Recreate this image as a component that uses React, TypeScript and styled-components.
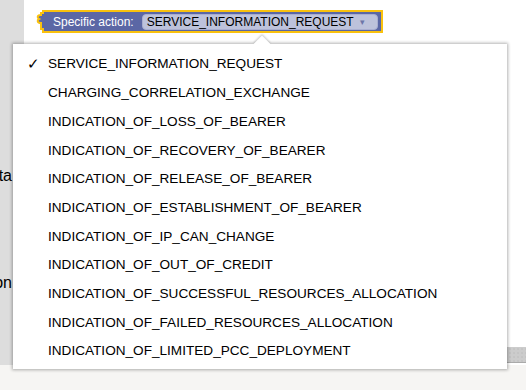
import React from 'react';
import styled, { createGlobalStyle } from 'styled-components';

const actions = [
  'SERVICE_INFORMATION_REQUEST',
  'CHARGING_CORRELATION_EXCHANGE',
  'INDICATION_OF_LOSS_OF_BEARER',
  'INDICATION_OF_RECOVERY_OF_BEARER',
  'INDICATION_OF_RELEASE_OF_BEARER',
  'INDICATION_OF_ESTABLISHMENT_OF_BEARER',
  'INDICATION_OF_IP_CAN_CHANGE',
  'INDICATION_OF_OUT_OF_CREDIT',
  'INDICATION_OF_SUCCESSFUL_RESOURCES_ALLOCATION',
  'INDICATION_OF_FAILED_RESOURCES_ALLOCATION',
  'INDICATION_OF_LIMITED_PCC_DEPLOYMENT',
];

const GlobalStyle = createGlobalStyle`
  html, body {
    margin: 0;
    padding: 0;
    width: 526px;
    height: 390px;
    overflow: hidden;
    font-family: "Liberation Sans", Arial, sans-serif;
  }
`;

function App() {
  const selected = actions[0];
  return (
    <>
      <GlobalStyle />
      <Sframe>
        <Stoolbox>
          <Scategory>Data</Scategory>
          <Scategory>Action</Scategory>
        </Stoolbox>
        <Sworkspace>
          <Sblock>
            <Stab width="8" height="18" viewBox="0 0 8 18">
              <path d="M8 1 H5 V3 C1 3 1 6 3 7 C1 8 1 11 5 11 V13 V17 H8" fill="#5b67a5" stroke="#f9c10e" strokeWidth="2" />
            </Stab>
            <Slabel>Specific action:</Slabel>
            <Sfield>
              {selected}
              <Scaret>▾</Scaret>
            </Sfield>
          </Sblock>
          <Spopup>
            <Sarrow />
            <Smenu>
              {actions.map((a) => (
                <Sitem key={a}>
                  <Scheck>{a === selected ? '✓' : ''}</Scheck>
                  {a}
                </Sitem>
              ))}
            </Smenu>
          </Spopup>
          <Sscroll />
        </Sworkspace>
        <Sfooter />
      </Sframe>
    </>
  );
}

const Sframe = styled.div`
  width: 526px;
  height: 390px;
  display: grid;
  grid-template-columns: 24px 1fr;
  grid-template-rows: 365px 1fr;
  background: #ffffff;
`;

const Stoolbox = styled.div`
  background: #dddddd;
  overflow: hidden;
  display: flex;
  flex-direction: column;
  align-items: flex-end;
  padding: 167px 12px 0 0;
  gap: 89px;
`;

const Scategory = styled.div`
  font-size: 16px;
  line-height: 18px;
  color: #000;
  white-space: nowrap;
`;

const Sworkspace = styled.div`
  position: relative;
  background: #ffffff;
`;

const Sblock = styled.div`
  position: absolute;
  left: 18px;
  top: 10px;
  width: 325px;
  height: 19px;
  background: #5b67a5;
  border: 2px solid #f9c10e;
  display: flex;
  align-items: center;
  padding: 0 3px 0 9px;
  gap: 8px;
  box-sizing: content-box;
`;

const Stab = styled.svg`
  position: absolute;
  left: -8px;
  top: 0px;
`;

const Slabel = styled.span`
  color: #ffffff;
  font-size: 12px;
  white-space: nowrap;
`;

const Sfield = styled.div`
  flex: 1;
  height: 14px;
  background: #bdc2db;
  border: 1px solid #a9aed0;
  border-radius: 4px;
  display: flex;
  align-items: center;
  padding: 0 4px;
  font-size: 12px;
  color: #000;
  white-space: nowrap;
`;

const Scaret = styled.span`
  color: #6d76a8;
  font-size: 9px;
  margin-left: 6px;
`;

const Spopup = styled.div`
  position: absolute;
  z-index: 2;
  left: -11px;
  top: 44px;
  width: 494px;
  height: 325px;
  background: #ffffff;
  box-shadow: 0 0 3px 1px rgba(0, 0, 0, 0.3);
`;

const Sarrow = styled.div`
  position: absolute;
  left: 243px;
  top: -6px;
  width: 12px;
  height: 12px;
  background: #ffffff;
  transform: rotate(45deg);
  box-shadow: -1px -1px 2px rgba(0, 0, 0, 0.2);
`;

const Smenu = styled.div`
  position: relative;
  background: #ffffff;
  padding: 6.4px 0 3px 0;
`;

const Sitem = styled.div`
  display: flex;
  align-items: center;
  padding: 6px 0;
  line-height: 16.7px;
  font-size: 13.6px;
  color: #000;
  white-space: nowrap;
`;

const Scheck = styled.span`
  width: 35px;
  padding-left: 14px;
  box-sizing: border-box;
  font-size: 15px;
`;

const Sscroll = styled.div`
  position: absolute;
  left: 0;
  right: 0;
  bottom: 2px;
  height: 15px;
  background-color: #cccccc;
  background-image: radial-gradient(#bbbbbb 0.6px, transparent 0.8px);
  background-size: 4px 4px;
  border-bottom: 1px solid #aaaaaa;
`;

const Sfooter = styled.div`
  grid-column: 1 / span 2;
  background: #f6f5f3;
`;

export default App;
